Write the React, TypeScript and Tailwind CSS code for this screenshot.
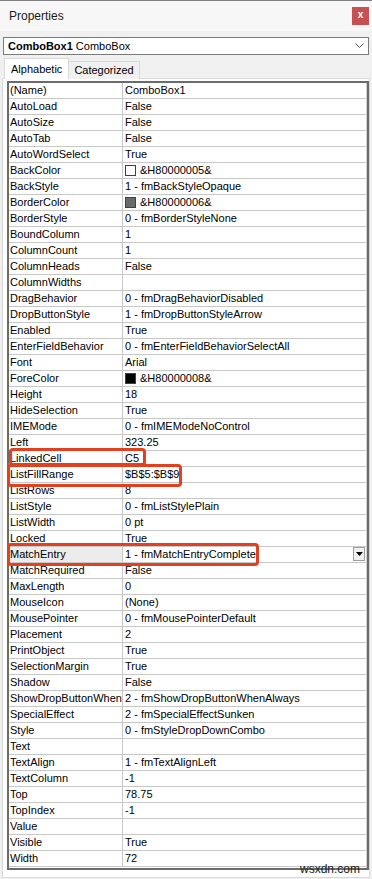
import React from "react";

type Row = { name: string; value: string; swatch?: string };

const rows: Row[] = [
  { name: "(Name)", value: "ComboBox1" },
  { name: "AutoLoad", value: "False" },
  { name: "AutoSize", value: "False" },
  { name: "AutoTab", value: "False" },
  { name: "AutoWordSelect", value: "True" },
  { name: "BackColor", value: "&H80000005&", swatch: "#ffffff" },
  { name: "BackStyle", value: "1 - fmBackStyleOpaque" },
  { name: "BorderColor", value: "&H80000006&", swatch: "#696969" },
  { name: "BorderStyle", value: "0 - fmBorderStyleNone" },
  { name: "BoundColumn", value: "1" },
  { name: "ColumnCount", value: "1" },
  { name: "ColumnHeads", value: "False" },
  { name: "ColumnWidths", value: "" },
  { name: "DragBehavior", value: "0 - fmDragBehaviorDisabled" },
  { name: "DropButtonStyle", value: "1 - fmDropButtonStyleArrow" },
  { name: "Enabled", value: "True" },
  { name: "EnterFieldBehavior", value: "0 - fmEnterFieldBehaviorSelectAll" },
  { name: "Font", value: "Arial" },
  { name: "ForeColor", value: "&H80000008&", swatch: "#000000" },
  { name: "Height", value: "18" },
  { name: "HideSelection", value: "True" },
  { name: "IMEMode", value: "0 - fmIMEModeNoControl" },
  { name: "Left", value: "323.25" },
  { name: "LinkedCell", value: "C5" },
  { name: "ListFillRange", value: "$B$5:$B$9" },
  { name: "ListRows", value: "8" },
  { name: "ListStyle", value: "0 - fmListStylePlain" },
  { name: "ListWidth", value: "0 pt" },
  { name: "Locked", value: "True" },
  { name: "MatchEntry", value: "1 - fmMatchEntryComplete" },
  { name: "MatchRequired", value: "False" },
  { name: "MaxLength", value: "0" },
  { name: "MouseIcon", value: "(None)" },
  { name: "MousePointer", value: "0 - fmMousePointerDefault" },
  { name: "Placement", value: "2" },
  { name: "PrintObject", value: "True" },
  { name: "SelectionMargin", value: "True" },
  { name: "Shadow", value: "False" },
  { name: "ShowDropButtonWhen", value: "2 - fmShowDropButtonWhenAlways" },
  { name: "SpecialEffect", value: "2 - fmSpecialEffectSunken" },
  { name: "Style", value: "0 - fmStyleDropDownCombo" },
  { name: "Text", value: "" },
  { name: "TextAlign", value: "1 - fmTextAlignLeft" },
  { name: "TextColumn", value: "-1" },
  { name: "Top", value: "78.75" },
  { name: "TopIndex", value: "-1" },
  { name: "Value", value: "" },
  { name: "Visible", value: "True" },
  { name: "Width", value: "72" },
];

function GridRow({ row }: { row: Row }) {
  const selected = row.name === "MatchEntry";
  return (
    <div className="flex h-[16px] border-b border-[#c8c8c8] text-[11px] leading-[15px] text-black">
      <div
        className={`w-[114px] shrink-0 border-r border-[#c8c8c8] pl-[1px] whitespace-nowrap overflow-hidden ${
          selected ? "bg-[#ececec]" : ""
        }`}
      >
        {row.name}
      </div>
      <div className="flex-1 flex items-center pl-[2px] whitespace-nowrap overflow-hidden relative">
        {row.swatch && (
          <span
            className="w-[11px] h-[11px] border border-[#404040] mr-[4px] shrink-0"
            style={{ backgroundColor: row.swatch }}
          />
        )}
        <span>{row.value}</span>
        {selected && (
          <div className="absolute right-[1px] top-[0px] w-[12px] h-[14px] bg-[#f0f0f0] border border-[#a0a0a0] flex items-center justify-center">
            <svg width="7" height="4" viewBox="0 0 7 4">
              <path d="M0 0h7L3.5 4z" fill="#000" />
            </svg>
          </div>
        )}
      </div>
    </div>
  );
}

export default function App() {
  return (
    <div className="w-[372px] h-[879px] bg-[#f0f0f0] relative overflow-hidden font-['Liberation_Sans',Arial,sans-serif]">
      {/* Title bar */}
      <div className="h-[31px] border-t border-[#7f7f7f] bg-[#f7f7f7] flex items-center justify-between pl-[9px] pr-[3px]">
        <span className="text-[12px] text-[#1a1a1a]">Properties</span>
        <div className="w-[17px] h-[18px] bg-[#c75050] text-white text-[10px] font-bold flex items-center justify-center leading-none pb-[2px]">
          x
        </div>
      </div>

      {/* Object combo */}
      <div className="mt-[6px] mx-[3px] h-[18px] border border-[#7a7a7a] bg-white flex items-center justify-between pl-[4px] pr-[4px] text-[11px]">
        <div className="whitespace-nowrap">
          <span className="font-bold">ComboBox1</span> <span>ComboBox</span>
        </div>
        <svg width="9" height="6" viewBox="0 0 9 6">
          <path d="M0.5 0.5L4.5 4.5L8.5 0.5" stroke="#555" fill="none" strokeWidth="1" />
        </svg>
      </div>

      {/* Tabs */}
      <div className="mt-[3px] ml-[4px] flex items-end h-[21px] text-[11px] relative z-10 -mb-px">
        <div className="h-[21px] px-[6px] bg-white border border-b-0 border-[#d9d9d9] flex items-center">
          Alphabetic
        </div>
        <div className="h-[18px] px-[5px] bg-[#f0f0f0] border border-l-0 border-b-0 border-[#d9d9d9] flex items-center">
          Categorized
        </div>
      </div>

      {/* Tab panel */}
      <div className="ml-[2px] w-[368px] h-[800px] border border-[#d9d9d9] bg-white pt-[2px] pl-[4px]">
        <div className="h-[789px] border-2 border-[#6b6b6b] bg-white">
          <div className="h-full border-r border-[#d0d0d0]">
            {rows.map((r) => (
              <GridRow key={r.name} row={r} />
            ))}
          </div>
        </div>
      </div>

      {/* Red annotations */}
      <div className="absolute left-[9px] top-[448px] w-[137px] h-[18px] border-[3px] border-[#e2401e] rounded-[4px]" />
      <div className="absolute left-[7px] top-[464px] w-[175px] h-[23px] border-[3px] border-[#e2401e] rounded-[4px]" />
      <div className="absolute left-[7px] top-[543px] w-[252px] h-[23px] border-[3px] border-[#e2401e] rounded-[4px]" />

      {/* Watermark */}
      <div className="absolute left-[300px] top-[863px] text-[12px] text-[#222] leading-none">wsxdn.com</div>
    </div>
  );
}
